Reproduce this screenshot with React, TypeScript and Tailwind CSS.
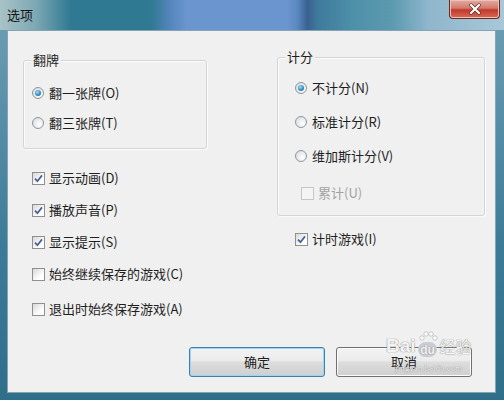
import React from 'react';

const font = "font-[family-name:'Noto_Sans_CJK_SC','Microsoft_YaHei',sans-serif]";

const Radio = ({ checked, label }: { checked?: boolean; label: string }) => (
  <div className="flex h-[20px] items-center gap-[5px]">
    <div className="flex h-[12px] w-[12px] items-center justify-center rounded-full border border-[#8d979f] bg-[radial-gradient(circle_at_65%_65%,#ffffff,#d3d6d9)]">
      {checked && (
        <div className="h-[6px] w-[6px] rounded-full bg-[radial-gradient(circle_at_40%_35%,#a6dcf6,#2f86bd_60%,#1c5a88)]" />
      )}
    </div>
    <span>{label}</span>
  </div>
);

const Check = ({ checked, disabled, label }: { checked?: boolean; disabled?: boolean; label: string }) => (
  <div className="flex h-[20px] items-center gap-[4px]">
    <div
      className={
        disabled
          ? 'flex h-[13px] w-[13px] items-center justify-center border border-[#c6c6c6] bg-[#f4f4f4]'
          : 'flex h-[13px] w-[13px] items-center justify-center border border-[#8e8f8f] bg-[linear-gradient(135deg,#d8d8d8,#ffffff_70%)]'
      }
    >
      {checked && (
        <svg width="11" height="11" viewBox="0 0 11 11">
          <path d="M2 5.6 L4.4 8.2 L9 2.4" fill="none" stroke="#4a5f94" strokeWidth="1.7" />
        </svg>
      )}
    </div>
    <span className={disabled ? 'text-[#a3a3a3]' : ''}>{label}</span>
  </div>
);

const GroupBox = ({ title, className, children }: { title: string; className: string; children: React.ReactNode }) => (
  <div className={`relative rounded-[3px] border border-[#d3d6d9] shadow-[inset_1px_1px_0_#fbfbfb,1px_1px_0_#fbfbfb] ${className}`}>
    <span className="absolute -top-[10px] left-[7px] bg-[#f0f0f0] px-[2px] leading-[18px]">{title}</span>
    {children}
  </div>
);

const Button = ({ label, focused }: { label: string; focused?: boolean }) => (
  <div
    className={
      focused
        ? 'flex h-[30px] w-[136px] items-center justify-center rounded-[3px] border border-[#3c7fb1] bg-[linear-gradient(#f3f3f3,#ebebeb_45%,#dddddd_50%,#cfcfcf)] shadow-[inset_0_0_0_1px_#9fd5f0]'
        : 'flex h-[30px] w-[136px] items-center justify-center rounded-[3px] border border-[#707070] bg-[linear-gradient(#f3f3f3,#ebebeb_45%,#dddddd_50%,#cfcfcf)] shadow-[inset_0_0_0_1px_#fcfcfc]'
    }
  >
    {label}
  </div>
);

export default function App() {
  return (
    <div
      className={`relative flex h-[400px] w-[504px] flex-col overflow-hidden bg-[linear-gradient(#6fa0b6,#3d7c98_60%,#2f6f8a)] text-[13px] leading-[18px] text-[#1e1e1e] ${font}`}
    >
      {/* title bar */}
      <div className="flex h-[30px] items-start justify-between bg-[linear-gradient(90deg,#a9c3c6_0%,#7ea8b4_7%,#2f7a92_14%,#2f7a92_30%,#5786be_34%,#6b95cf_37%,#6b95cf_57%,#5a88c0_59%,#3a6090_61%,#3f7a9c_63%,#4d90a8_70%,#5d9ab0_78%,#8fb6cc_85%,#a8c8d8_100%)]">
        <span className="ml-[7px] mt-[6px] text-[#151515]">选项</span>
        <div className="mr-[4px] flex h-[19px] w-[51px] items-center justify-center rounded-b-[4px] border border-t-0 border-[#6b2a22] bg-[linear-gradient(#e3aca4,#d27a6d_45%,#c4382c_55%,#d86a55)] shadow-[inset_0_0_0_1px_#eec0b8]">
          <svg width="14" height="12" viewBox="0 0 14 12">
            <path d="M3 2 L11 10 M11 2 L3 10" stroke="#5a2a26" strokeWidth="3.4" strokeLinecap="round" />
            <path d="M3 2 L11 10 M11 2 L3 10" stroke="#ffffff" strokeWidth="2.2" strokeLinecap="round" />
          </svg>
        </div>
      </div>

      {/* client area */}
      <div className="ml-[7px] mr-[8px] flex h-[363px] flex-col border border-[#86a3b6] bg-[#f0f0f0]">
        <div className="flex pl-[15px] pt-[26px]">
          {/* left column */}
          <div className="mt-[3px] flex w-[184px] flex-col">
            <GroupBox title="翻牌" className="h-[89px] pl-[8px] pt-[22px]">
              <div className="flex flex-col gap-[10px]">
                <Radio checked label="翻一张牌(O)" />
                <Radio label="翻三张牌(T)" />
              </div>
            </GroupBox>
            <div className="mt-[19px] flex flex-col gap-[12px] pl-[9px]">
              <Check checked label="显示动画(D)" />
              <Check checked label="播放声音(P)" />
              <Check checked label="显示提示(S)" />
              <Check label="始终继续保存的游戏(C)" />
              <div className="mt-[3px]">
                <Check label="退出时始终保存游戏(A)" />
              </div>
            </div>
          </div>

          {/* right column */}
          <div className="ml-[70px] flex w-[208px] flex-col">
            <GroupBox title="计分" className="h-[159px] pl-[17px] pt-[20px]">
              <div className="flex flex-col gap-[14px]">
                <Radio checked label="不计分(N)" />
                <Radio label="标准计分(R)" />
                <Radio label="维加斯计分(V)" />
                <div className="ml-[6px] mt-[3px]">
                  <Check disabled label="累计(U)" />
                </div>
              </div>
            </GroupBox>
            <div className="mt-[13px] pl-[18px]">
              <Check checked label="计时游戏(I)" />
            </div>
          </div>
        </div>

        <div className="mt-auto flex justify-end gap-[11px] pb-[15px] pr-[23px]">
          <Button focused label="确定" />
          <Button label="取消" />
        </div>
      </div>

      {/* watermark */}
      <div className="pointer-events-none absolute left-[386px] top-[330px] flex flex-col items-center text-white/90 [text-shadow:0_0_1px_#8a8a8a,0_0_1px_#8a8a8a]">
        <div className="flex items-end">
          <span className="text-[19px] font-bold leading-[22px] [font-family:'Liberation_Sans',sans-serif]">Bai</span>
          <div className="mx-[2px] flex flex-col items-center">
            <svg width="20" height="12" viewBox="0 0 20 12">
              <circle cx="4" cy="8" r="2.2" fill="#ffffff" stroke="#b9b9b9" strokeWidth="0.8" />
              <circle cx="8" cy="4" r="2.2" fill="#ffffff" stroke="#b9b9b9" strokeWidth="0.8" />
              <circle cx="13" cy="4" r="2.2" fill="#ffffff" stroke="#b9b9b9" strokeWidth="0.8" />
              <circle cx="17" cy="8" r="2.2" fill="#ffffff" stroke="#b9b9b9" strokeWidth="0.8" />
            </svg>
            <span className="flex h-[15px] w-[19px] items-center justify-center rounded-full bg-[#c9ccd3] text-[12px] font-bold leading-[14px] [font-family:'Liberation_Sans',sans-serif]">du</span>
          </div>
          <span className="text-[16px] leading-[22px]">经验</span>
        </div>
        <span className="mt-[6px] text-[9px] leading-[10px] [font-family:'Liberation_Serif',serif]">jingyan.baidu.com</span>
      </div>
    </div>
  );
}
